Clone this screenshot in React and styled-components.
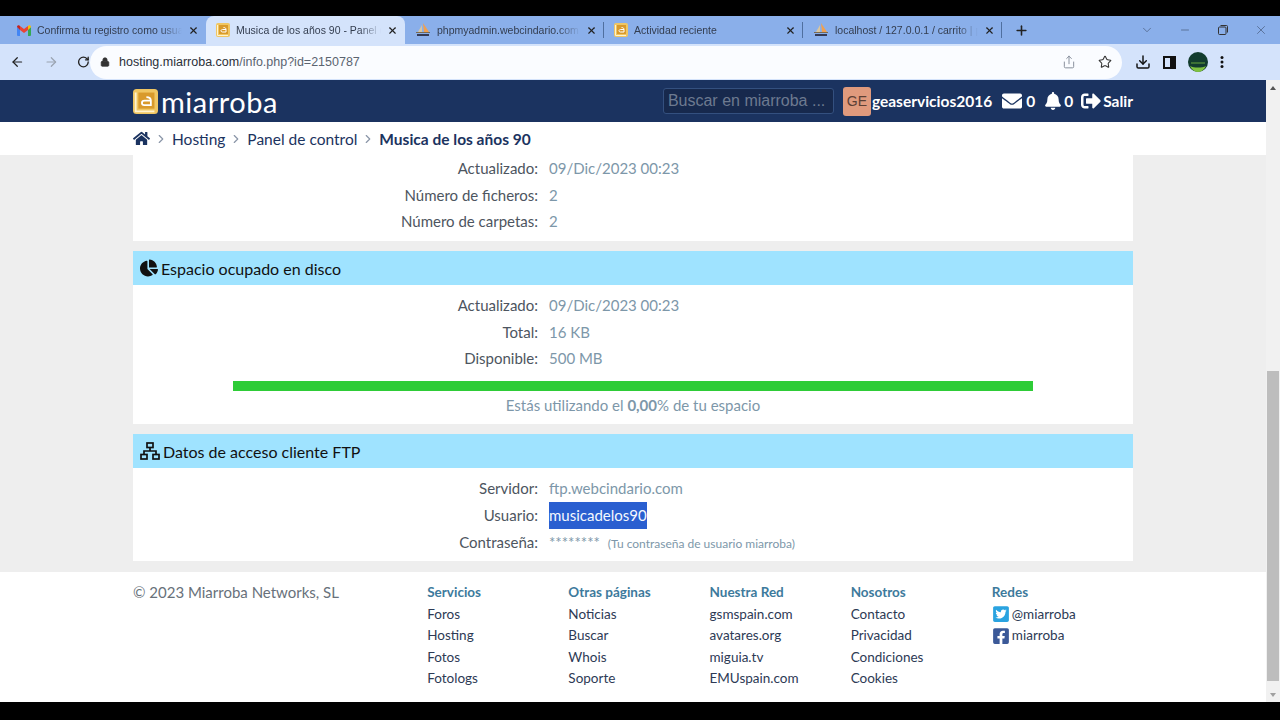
import React from 'react';
import styled, { createGlobalStyle } from 'styled-components';
import { FaHome, FaChartPie, FaEnvelope, FaBell, FaSignOutAlt, FaTwitterSquare, FaFacebookSquare } from 'react-icons/fa';
import { ArrowLeft, ArrowRight, RotateCw, Lock, Star, Download, Minus, X, ChevronDown, Plus, ChevronRight, Share } from 'lucide-react';

const font = `"Lato", "Noto Sans", sans-serif`;

const Global = createGlobalStyle`
  html, body { margin: 0; padding: 0; background: #000; }
  body { font-family: ${font}; overflow: hidden; }
  * { box-sizing: border-box; }
`;

const tabs = [
  { icon: 'gmail', title: 'Confirma tu registro como usuario' },
  { icon: 'miarroba', title: 'Musica de los años 90 - Panel de control', active: true },
  { icon: 'pma', title: 'phpmyadmin.webcindario.com / localhost' },
  { icon: 'miarroba', title: 'Actividad reciente' },
  { icon: 'pma', title: 'localhost / 127.0.0.1 / carrito | phpMyAdmin' },
];

const footerCols = [
  { title: 'Servicios', links: ['Foros', 'Hosting', 'Fotos', 'Fotologs'] },
  { title: 'Otras páginas', links: ['Noticias', 'Buscar', 'Whois', 'Soporte'] },
  { title: 'Nuestra Red', links: ['gsmspain.com', 'avatares.org', 'miguia.tv', 'EMUspain.com'] },
  { title: 'Nosotros', links: ['Contacto', 'Privacidad', 'Condiciones', 'Cookies'] },
];

const GmailIcon = () => (
  <svg width="14" height="11" viewBox="0 0 14 11">
    <path d="M0 2v8a1 1 0 0 0 1 1h2V4.5z" fill="#4285f4" />
    <path d="M14 2v8a1 1 0 0 1-1 1h-2V4.5z" fill="#34a853" />
    <path d="M3 5V1L7 4l4-3v4L7 8z" fill="#ea4335" />
    <path d="M0 2c0-1.6 2-2.300 3-1v4z" fill="#c5221f" />
    <path d="M14 2c0-1.600-2-2.300-3-1v4z" fill="#fbbc04" />
  </svg>
);

const MiarrobaIcon = ({ size = 14 }) => (
  <svg width={size} height={size} viewBox="0 0 14 14">
    <rect width="14" height="14" rx="2" fill="#f0c662" />
    <rect x="3" y="2" width="9" height="9" fill="#d99a2b" />
    <path d="M7.5 4.500c2 0 2.500 1 2.500 2V9H6.300C5.400 9 5 8.300 5 7.800 5 7 5.700 6.500 6.500 6.500H10" fill="none" stroke="#fff" strokeWidth="1" />
    <path d="M1.500 2v10.500H12" fill="none" stroke="#fff3cf" strokeWidth="1" />
  </svg>
);

const PmaIcon = () => (
  <svg width="16" height="14" viewBox="0 0 16 14">
    <path d="M8 0c2 3 4 6 6 9H9z" fill="#f0a050" />
    <path d="M7 2 3 9h4z" fill="#d8c6a0" />
    <path d="M1 9h14v1H1z" fill="#7a6a50" />
    <path d="M2 11h12v2H2z" fill="#333a55" />
  </svg>
);

const SitemapIcon = () => (
  <svg width="20" height="18" viewBox="0 0 20 18" fill="none" stroke="#111" strokeWidth="1.700">
    <rect x="7" y="1" width="6" height="4.500" />
    <rect x="1" y="12.500" width="6" height="4.500" />
    <rect x="13" y="12.500" width="6" height="4.500" />
    <path d="M10 5.500V9M4 12.500V9h12v3.500" />
  </svg>
);

const SidePanelIcon = () => (
  <svg width="13" height="13" viewBox="0 0 13 13">
    <path d="M1 1h11v11H1z" fill="none" stroke="#111" strokeWidth="2" />
    <path d="M7 1h5v11H7z" fill="#111" />
  </svg>
);

const RestoreIcon = () => (
  <svg width="10" height="10" viewBox="0 0 10 10" fill="none" stroke="#333" strokeWidth="1">
    <rect x="0.500" y="2" width="7.500" height="7.500" rx="1" />
    <path d="M2.500 .5h6a1 1 0 0 1 1 1v6" />
  </svg>
);

const AvatarIcon = () => (
  <svg width="20" height="20" viewBox="0 0 20 20">
    <circle cx="10" cy="10" r="10" fill="#123c2e" />
    <path d="M2 14c4 2 12 2 16 0-2 4-5 6-8 6s-6-2-8-6z" fill="#7fc241" />
    <path d="M3 11h14" stroke="#7fc241" strokeWidth=".8" />
  </svg>
);

const tabIcon = { gmail: <GmailIcon />, miarroba: <MiarrobaIcon />, pma: <PmaIcon /> };

const Page = styled.div`
  width: 1280px;
  height: 720px;
  display: flex;
  flex-direction: column;
  background: #000;
  overflow: hidden;
`;

const BlackBar = styled.div`
  flex: none;
  height: ${p => p.$h}px;
  background: #000;
`;

const TabStrip = styled.div`
  flex: none;
  height: 28px;
  display: flex;
  align-items: stretch;
  background: #8aafea;
`;

const Tab = styled.div`
  width: ${p => p.$first ? 206 : 199}px;
  display: flex;
  align-items: center;
  gap: 6px;
  padding: 0 7px 0 ${p => p.$first ? 17 : 10}px;
  border-radius: 8px 8px 0 0;
  background: ${p => p.$active ? '#d4e3fb' : 'transparent'};
  position: relative;
  &::after {
    content: '';
    display: ${p => p.$divider ? 'block' : 'none'};
    position: absolute;
    right: 0;
    top: 6px;
    height: 16px;
    width: 1px;
    background: #4f6f9f;
  }
`;

const TabTitle = styled.span`
  flex: 1;
  min-width: 0;
  font: 10.500px "Liberation Sans", sans-serif;
  color: #333d4f;
  white-space: nowrap;
  overflow: hidden;
  mask-image: linear-gradient(90deg, #000 85%, transparent);
`;

const WindowControls = styled.div`
  flex: 1;
  display: flex;
  align-items: center;
  color: #222;
  padding-left: 12px;
`;

const WinButton = styled.span`
  display: flex;
  align-items: center;
  justify-content: center;
  width: ${p => p.$w || 38}px;
  color: #3a4a66;
`;

const Spacer = styled.div`
  flex: 1;
`;

const Toolbar = styled.div`
  flex: none;
  height: 36px;
  display: flex;
  align-items: center;
  background: #d4e3fb;
  padding: 0 10px;
`;

const NavButtons = styled.div`
  display: flex;
  align-items: center;
  gap: 19px;
  width: 80px;
`;

const UrlBar = styled.div`
  width: 1032px;
  height: 33px;
  margin-top: 0;
  border-radius: 17px;
  background: #fafcff;
  display: flex;
  align-items: center;
  padding: 0 10px;
  gap: 9px;
  font: 12.500px "Liberation Sans", sans-serif;
  color: #2a2f38;
`;

const UrlPath = styled.span`
  color: #5b6470;
`;

const ToolIcons = styled.div`
  display: flex;
  align-items: center;
  gap: 12px;
  flex: 1;
  padding-left: 13px;
`;

const Viewport = styled.div`
  flex: 1;
  min-height: 0;
  display: flex;
`;

const Site = styled.div`
  flex: 1;
  min-width: 0;
  display: flex;
  flex-direction: column;
  background: #eeeeee;
`;

const Scrollbar = styled.div`
  width: 14px;
  display: flex;
  flex-direction: column;
  background: #f1f1f1;
  align-items: center;
`;

const Thumb = styled.div`
  width: 12px;
  height: 310px;
  margin: auto 0 12px;
  background: #bdbdbd;
`;

const ScrollArrow = styled.span`
  width: 0;
  height: 0;
  margin-top: ${p => p.$up ? 6 : 0}px;
  margin-bottom: ${p => p.$up ? 0 : 5}px;
  border-left: 3px solid transparent;
  border-right: 3px solid transparent;
  border-bottom: ${p => p.$up ? '4px solid #555' : 'none'};
  border-top: ${p => p.$up ? 'none' : '4px solid #a0a0a0'};
`;

const Header = styled.header`
  flex: none;
  height: 42px;
  background: #1b3360;
  display: flex;
  align-items: center;
  padding: 0 133px;
  color: #fff;
`;

const Logo = styled.div`
  display: flex;
  align-items: center;
  gap: 3px;
  font-size: 29px;
  line-height: 1;
  letter-spacing: 0.500px;
  flex: 1;
`;

const Search = styled.div`
  width: 171px;
  height: 26px;
  display: flex;
  align-items: center;
  padding-left: 4px;
  border: 1px solid #34507f;
  border-radius: 3px;
  background: #17294d;
  color: #6d7a90;
  font: 16px "Liberation Sans", sans-serif;
`;

const UserBadge = styled.div`
  width: 28px;
  height: 29px;
  margin-left: 9px;
  border-radius: 3px;
  background: #e09a7d;
  color: #5c3f35;
  display: flex;
  align-items: center;
  justify-content: center;
  font: 14px "Liberation Sans", sans-serif;
`;

const UserName = styled.span`
  margin-left: 1px;
  font-size: 15.500px;
  font-weight: 700;
`;

const HeaderItem = styled.span`
  display: flex;
  align-items: center;
  gap: ${p => p.$gap || 4}px;
  margin-left: ${p => p.$ml || 10}px;
  font-size: 15.500px;
  font-weight: 700;
`;

const Crumbs = styled.nav`
  flex: none;
  height: 33px;
  background: #fff;
  display: flex;
  align-items: center;
  padding: 0 133px;
  gap: 4px;
  font-size: 15.500px;
  color: #1b3360;
`;

const CrumbCurrent = styled.span`
  font-weight: 700;
`;

const Content = styled.main`
  flex: 1;
  min-height: 0;
  padding: 0 133px 10px;
  display: flex;
  flex-direction: column;
  gap: 10px;
`;

const Panel = styled.section`
  background: #fff;
  padding-bottom: ${p => p.$pb || 6}px;
`;

const PanelHead = styled.h2`
  margin: 0 0 7px;
  height: 34px;
  padding: 0 7px;
  display: flex;
  align-items: center;
  gap: 3px;
  background: #9fe3ff;
  color: #111;
  font-size: 16px;
  font-weight: 400;
`;

const Row = styled.div`
  display: grid;
  grid-template-columns: 405px 1fr;
  column-gap: 11px;
  height: 26.700px;
  line-height: 26.700px;
  font-size: 15px;
`;

const Label = styled.span`
  text-align: right;
  color: #4d5560;
`;

const Value = styled.span`
  color: #7d97a9;
`;

const Selected = styled.span`
  justify-self: start;
  background: #2a5fd0;
  color: #f4f8ff;
`;

const Hint = styled.span`
  font-size: 12px;
  margin-left: 4px;
`;

const Bar = styled.div`
  width: 800px;
  height: 10px;
  margin: 9px auto 0;
  background: #2ecc37;
`;

const Usage = styled.p`
  margin: 4px 0 0;
  text-align: center;
  font-size: 15px;
  line-height: 20px;
  color: #7d97a9;
`;

const Footer = styled.footer`
  flex: none;
  height: 130px;
  background: #fff;
  padding: 10px 133px 0;
  display: flex;
`;

const Copy = styled.div`
  width: 297px;
  font-size: 15px;
  line-height: 21px;
  color: #68717a;
`;

const FooterCol = styled.div`
  width: 142.500px;
  display: flex;
  flex-direction: column;
  font-size: 13.500px;
  line-height: 21.500px;
  color: #2d3a55;
`;

const ColTitle = styled.span`
  color: #3d7a9c;
  font-weight: 700;
`;

const SocialLink = styled.span`
  display: flex;
  align-items: center;
  gap: 2px;
`;

export default function App() {
  return (
    <>
      <Global />
      <Page>
        <BlackBar $h={16} />
        <TabStrip>
          {tabs.map((t, i) => (
            <Tab key={i} $first={i === 0} $active={t.active} $divider={i > 1}>
              {tabIcon[t.icon]}
              <TabTitle>{t.title}</TabTitle>
              <X size={11} strokeWidth={2.500} color="#222" />
            </Tab>
          ))}
          <WindowControls>
            <Plus size={15} strokeWidth={2.500} />
            <Spacer />
            <WinButton><ChevronDown size={14} strokeWidth={1} /></WinButton>
            <WinButton><Minus size={12} strokeWidth={1.200} /></WinButton>
            <WinButton><RestoreIcon /></WinButton>
            <WinButton><X size={14} strokeWidth={1} /></WinButton>
          </WindowControls>
        </TabStrip>
        <Toolbar>
          <NavButtons>
            <ArrowLeft size={16} color="#222" strokeWidth={2} />
            <ArrowRight size={16} color="#9aa3b0" strokeWidth={2} />
            <RotateCw size={14} color="#222" strokeWidth={2.500} />
          </NavButtons>
          <UrlBar>
            <Lock size={10} fill="#333" color="#333" />
            <span>hosting.miarroba.com<UrlPath>/info.php?id=2150787</UrlPath></span>
            <Spacer />
            <Share size={14} color="#7a8290" strokeWidth={1.500} />
            <Spacer style={{ flex: 'none', width: 4 }} />
            <Star size={14} color="#333" strokeWidth={1.800} />
          </UrlBar>
          <ToolIcons>
            <Download size={16} color="#111" strokeWidth={2.200} />
            <SidePanelIcon />
            <AvatarIcon />
            <svg width="4" height="14" viewBox="0 0 4 14" fill="#111">
              <circle cx="2" cy="2.500" r="1.500" /><circle cx="2" cy="7" r="1.500" /><circle cx="2" cy="11.500" r="1.500" />
            </svg>
          </ToolIcons>
        </Toolbar>
        <Viewport>
          <Site>
            <Header>
              <Logo>
                <MiarrobaIcon size={25} />
                miarroba
              </Logo>
              <Search>Buscar en miarroba ...</Search>
              <UserBadge>GE</UserBadge>
              <UserName>geaservicios2016</UserName>
              <HeaderItem $ml={10}><FaEnvelope size={20} /> 0</HeaderItem>
              <HeaderItem $ml={9} $gap={2}><FaBell size={18} /> 0</HeaderItem>
              <HeaderItem $ml={8} $gap={2}><FaSignOutAlt size={20} /> Salir</HeaderItem>
            </Header>
            <Crumbs>
              <FaHome size={17} />
              <ChevronRight size={14} color="#8a96a8" />
              Hosting
              <ChevronRight size={14} color="#8a96a8" />
              Panel de control
              <ChevronRight size={14} color="#8a96a8" />
              <CrumbCurrent>Musica de los años 90</CrumbCurrent>
            </Crumbs>
            <Content>
              <Panel>
                <Row><Label>Actualizado:</Label><Value>09/Dic/2023 00:23</Value></Row>
                <Row><Label>Número de ficheros:</Label><Value>2</Value></Row>
                <Row><Label>Número de carpetas:</Label><Value>2</Value></Row>
              </Panel>
              <Panel $pb={9}>
                <PanelHead><FaChartPie size={18} /> Espacio ocupado en disco</PanelHead>
                <Row><Label>Actualizado:</Label><Value>09/Dic/2023 00:23</Value></Row>
                <Row><Label>Total:</Label><Value>16 KB</Value></Row>
                <Row><Label>Disponible:</Label><Value>500 MB</Value></Row>
                <Bar />
                <Usage>Estás utilizando el <b>0,00</b>% de tu espacio</Usage>
              </Panel>
              <Panel>
                <PanelHead><SitemapIcon /> Datos de acceso cliente FTP</PanelHead>
                <Row><Label>Servidor:</Label><Value>ftp.webcindario.com</Value></Row>
                <Row><Label>Usuario:</Label><Selected>musicadelos90</Selected></Row>
                <Row><Label>Contraseña:</Label><Value>******** <Hint>(Tu contraseña de usuario miarroba)</Hint></Value></Row>
              </Panel>
            </Content>
            <Footer>
              <Copy>© 2023 Miarroba Networks, SL</Copy>
              {footerCols.map(col => (
                <FooterCol key={col.title}>
                  <ColTitle>{col.title}</ColTitle>
                  {col.links.map(l => <span key={l}>{l}</span>)}
                </FooterCol>
              ))}
              <FooterCol>
                <ColTitle>Redes</ColTitle>
                <SocialLink><FaTwitterSquare size={18} color="#2aa3e0" /> @miarroba</SocialLink>
                <SocialLink><FaFacebookSquare size={18} color="#3b5998" /> miarroba</SocialLink>
              </FooterCol>
            </Footer>
          </Site>
          <Scrollbar>
            <ScrollArrow $up />
            <Thumb />
            <ScrollArrow />
          </Scrollbar>
        </Viewport>
        <BlackBar $h={18} />
      </Page>
    </>
  );
}
